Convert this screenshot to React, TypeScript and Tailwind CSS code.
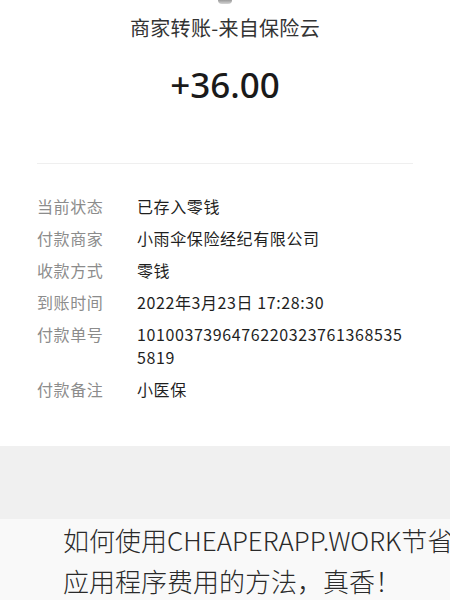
import React from "react";

const cjk = { fontFamily: '"Noto Sans CJK SC", "Noto Sans", sans-serif' };

const rows: { label: string; value: string[] }[] = [
  { label: "当前状态", value: ["已存入零钱"] },
  { label: "付款商家", value: ["小雨伞保险经纪有限公司"] },
  { label: "收款方式", value: ["零钱"] },
  { label: "到账时间", value: ["2022年3月23日 17:28:30"] },
  { label: "付款单号", value: ["1010037396476220323761368535", "5819"] },
  { label: "付款备注", value: ["小医保"] },
];

export default function App() {
  return (
    <div className="w-[450px] h-[600px] overflow-hidden bg-white flex flex-col" style={cjk}>
      <div className="h-[446px] bg-white flex flex-col shrink-0">
        <div className="flex justify-center">
          <div className="w-[14px] h-[4px] rounded-b-full bg-gradient-to-b from-[#9a9a9a] to-[#d6d6d6]" />
        </div>
        <div className="mt-[10px] text-center text-[20px] leading-[28px] tracking-[0.3px] text-[#333]">
          商家转账-来自保险云
        </div>
        <div
          className="mt-[23px] text-center text-[35px] leading-[40px] font-medium text-[#1a1a1a]"
          style={{ fontFamily: '"Noto Sans", "Open Sans", sans-serif' }}
        >
          +36.00
        </div>
        <div className="mt-[58px] mx-[37px] h-px bg-[#efefef]" />
        <div className="mt-[31px] px-[37px] flex flex-col gap-[9px]">
          {rows.map((r) => (
            <div key={r.label} className="flex text-[16px] leading-[23px] tracking-[0.6px]">
              <div className="w-[100px] shrink-0 text-[#8c8c8c]">{r.label}</div>
              <div className="flex flex-col text-[#1f1f1f]">
                {r.value.map((v) => (
                  <div key={v} className="whitespace-nowrap">{v}</div>
                ))}
              </div>
            </div>
          ))}
        </div>
      </div>
      <div className="h-[73px] bg-[#f0f0f0] shrink-0" />
      <div className="flex-1 bg-[#f9f9f9] pl-[63px] text-[26px] leading-[41px] font-light text-[#2a2a2a] whitespace-nowrap">
        <div>如何使用CHEAPERAPP.WORK节省</div>
        <div>应用程序费用的方法，真香！</div>
      </div>
    </div>
  );
}
